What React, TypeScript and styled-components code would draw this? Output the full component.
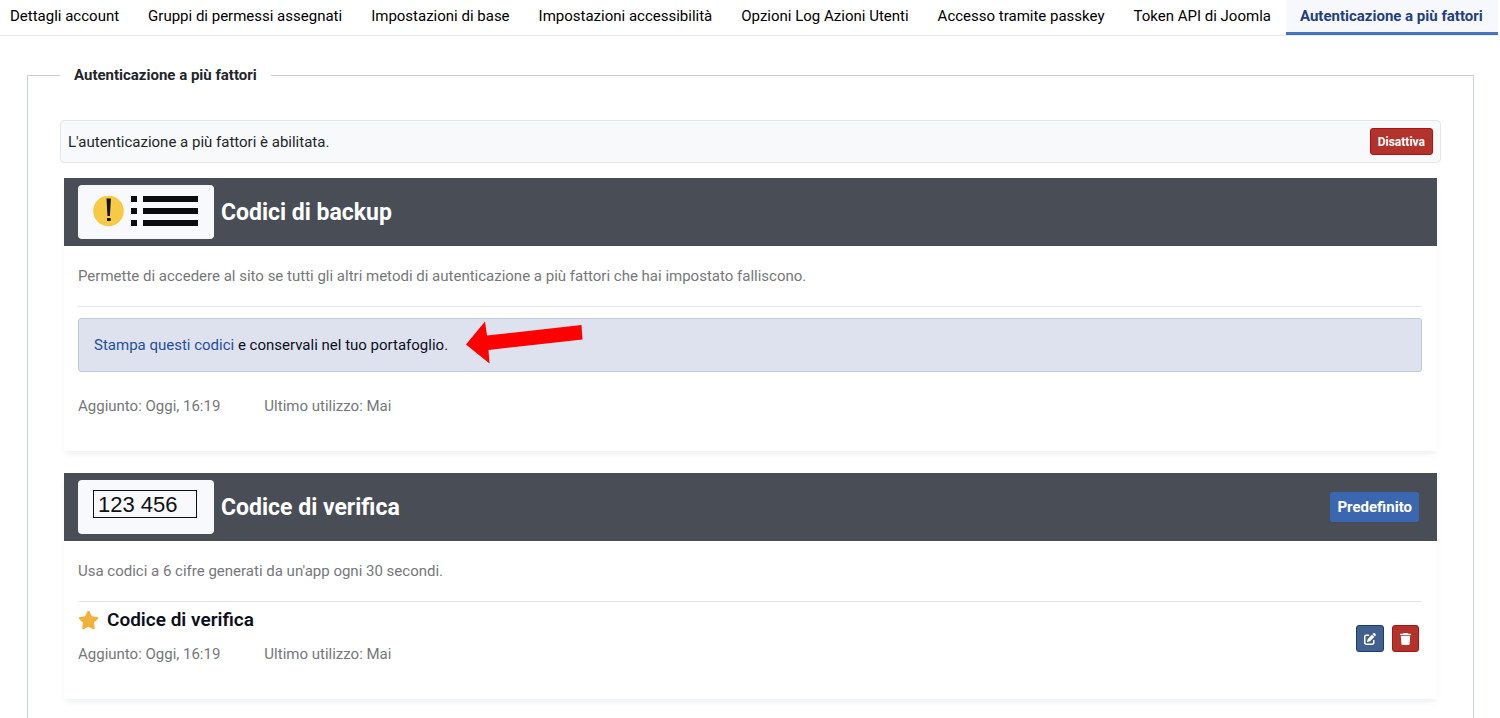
import React from "react";
import styled, { createGlobalStyle, css } from "styled-components";
import { FaPenToSquare, FaStar } from "react-icons/fa6";

const GlobalStyle = createGlobalStyle`
  *, *::before, *::after { box-sizing: border-box; }
  body {
    margin: 0;
    background: #fff;
    color: #22262a;
    font-family: Roboto, "Liberation Sans", sans-serif;
    font-size: 15px;
    line-height: 22px;
  }
  #root { overflow-x: hidden; }
`;

const Page = styled.div`
  display: flex;
  flex-direction: column;
  min-height: 100vh;
`;

const TabList = styled.nav`
  display: flex;
  margin-left: -4px;
  border-bottom: 1px solid #e6eaee;
`;

const Tab = styled.button<{ $active?: boolean }>`
  border: 0;
  border-bottom: 3px solid transparent;
  padding: 5px 15px 5px 14px;
  background: none;
  color: #000;
  font: inherit;
  white-space: nowrap;
  cursor: pointer;
  ${(p) =>
    p.$active &&
    css`
      border-bottom-color: #4674bd;
      background: #f6f8fb;
      color: #1f4080;
      font-weight: 700;
    `}
`;

const Panel = styled.fieldset`
  flex: 1;
  min-width: 0;
  margin: 24px 26px 0 27px;
  border: 1px solid #c6d3de;
  border-bottom: 0;
  padding: 30px 32px 20px;
`;

const Legend = styled.legend`
  padding: 4px 14px;
  color: #22262a;
  font-weight: 700;
`;

const StatusBar = styled.div`
  display: flex;
  align-items: center;
  justify-content: space-between;
  margin-bottom: 15px;
  border: 1px solid #e3e7eb;
  border-radius: 4px;
  padding: 7px;
  background: #f7f9fb;
`;

const Button = styled.button<{ $tone: "danger" | "primary" }>`
  display: inline-flex;
  align-items: center;
  justify-content: center;
  height: 27px;
  border: 1px solid ${(p) => (p.$tone === "danger" ? "#b50f12" : "#123d78")};
  border-radius: 3px;
  padding: 0 7px;
  background: ${(p) => (p.$tone === "danger" ? "#b2322c" : "#44608d")};
  color: #fff;
  font: 700 12px/18px Roboto, "Liberation Sans", sans-serif;
  cursor: pointer;
`;

const Card = styled.section`
  margin: 0 4px 22px;
  background: #fff;
  box-shadow: 0 4px 6px -2px rgba(30, 60, 100, 0.1);
`;

const CardHeader = styled.header`
  display: flex;
  align-items: center;
  gap: 7px;
  padding: 7px 18px 7px 14px;
  background: #494e56;
`;

const Thumb = styled.div`
  display: flex;
  width: 136px;
  height: 54px;
  padding: 7px 14px;
  border-radius: 4px;
  background: #f8f9fc;
`;

const CardTitle = styled.h2`
  flex: 1;
  margin: 0;
  padding-top: 2px;
  color: #fff;
  font-size: 23px;
  font-weight: 700;
  line-height: 28px;
`;

const Badge = styled.span`
  border-radius: 3px;
  padding: 4px 7px;
  background: #3b67b1;
  color: #fff;
  font-weight: 700;
`;

const CardBody = styled.div`
  padding: 19px 15px 34px 14px;
  color: #757779;
`;

const Description = styled.p`
  margin: 0;
  padding-bottom: 19px;
  border-bottom: 1px solid #e2e7ec;
`;

const Notice = styled.div`
  display: flex;
  align-items: center;
  gap: 18px;
  margin: 11px 0 23px;
  border: 1px solid #bfcadd;
  border-radius: 3px;
  padding: 0 15px;
  background: #dde2ee;
  color: #0b0f1c;
`;

const PrintLink = styled.a`
  color: #1f4f9f;
  text-decoration: none;
`;

const Meta = styled.div`
  display: flex;
  gap: 44px;
`;

const Method = styled.div`
  display: flex;
  align-items: center;
  justify-content: space-between;
  padding-top: 8px;
`;

const MethodTitle = styled.h3`
  display: flex;
  align-items: center;
  gap: 8px;
  margin: 0 0 13px;
  color: #0b0f1c;
  font-size: 19px;
  font-weight: 600;
  line-height: 20px;
`;

const Star = styled(FaStar)`
  width: 21px;
  height: 20px;
  color: #f0b23a;
`;

const Actions = styled.div`
  display: flex;
  gap: 8px;
  padding: 2px 3px 0 0;
`;

const tabs = [
  "Dettagli account",
  "Gruppi di permessi assegnati",
  "Impostazioni di base",
  "Impostazioni accessibilità",
  "Opzioni Log Azioni Utenti",
  "Accesso tramite passkey",
  "Token API di Joomla",
  "Autenticazione a più fattori",
];

const BackupCodesArt = () => (
  <svg width="108" height="40" viewBox="0 0 108 40" aria-hidden="true">
    <circle cx="16.500" cy="19" r="15.300" fill="#f6ca45" />
    <path d="M14.500 6.500h4.400l-1 17.500h-2.400zM15 26h3.600v3h-3.600z" fill="#111" />
    <path
      d="M39 4h6v6h-6zM39 16h6v6h-6zM39 28h6v6h-6zM51 4h55v6H51zM51 16h55v6H51zM51 28h55v6H51z"
      fill="#0b0b0d"
    />
  </svg>
);

const VerificationCodeArt = () => (
  <svg width="108" height="40" viewBox="0 0 108 40" aria-hidden="true">
    <rect x="1.500" y="3.500" width="103" height="27" fill="none" stroke="#111" />
    <text x="6" y="25" fontFamily="Liberation Sans, sans-serif" fontSize="22" fill="#111">
      123 456
    </text>
  </svg>
);

const RedArrow = () => (
  <svg width="117" height="52" viewBox="0 0 117 52" aria-hidden="true">
    <path d="M0 25.500 19 2.500 21 16.500 115.500 6 116.500 20.500 22.500 31 23.500 44.500z" fill="#fe0000" />
  </svg>
);

const TrashIcon = () => (
  <svg width="11" height="12" viewBox="0 0 11 12" fill="currentColor" aria-hidden="true">
    <path d="M3.500 0h4l.5.7h2.500q.5 0 .5.5v.8H0v-.8q0-.5.5-.5H3zM.8 2.700h9.400l-.6 8.200q-.1 1.100-1.100 1.100h-6q-1 0-1.100-1.100z" />
  </svg>
);

const Usage = () => (
  <Meta>
    <span>Aggiunto: Oggi, 16:19</span>
    <span>Ultimo utilizzo: Mai</span>
  </Meta>
);

export default function App() {
  return (
    <Page>
      <GlobalStyle />
      <TabList role="tablist">
        {tabs.map((label, i) => (
          <Tab
            key={label}
            type="button"
            role="tab"
            aria-selected={i === tabs.length - 1}
            $active={i === tabs.length - 1}
          >
            {label}
          </Tab>
        ))}
      </TabList>
      <Panel>
        <Legend>Autenticazione a più fattori</Legend>
        <StatusBar>
          <span>L'autenticazione a più fattori è abilitata.</span>
          <Button type="button" $tone="danger">
            Disattiva
          </Button>
        </StatusBar>
        <Card>
          <CardHeader>
            <Thumb>
              <BackupCodesArt />
            </Thumb>
            <CardTitle>Codici di backup</CardTitle>
          </CardHeader>
          <CardBody>
            <Description>
              Permette di accedere al sito se tutti gli altri metodi di autenticazione a più fattori che hai
              impostato falliscono.
            </Description>
            <Notice>
              <span>
                <PrintLink href="#codici">Stampa questi codici</PrintLink> e conservali nel tuo portafoglio.
              </span>
              <RedArrow />
            </Notice>
            <Usage />
          </CardBody>
        </Card>
        <Card>
          <CardHeader>
            <Thumb>
              <VerificationCodeArt />
            </Thumb>
            <CardTitle>Codice di verifica</CardTitle>
            <Badge>Predefinito</Badge>
          </CardHeader>
          <CardBody>
            <Description>Usa codici a 6 cifre generati da un'app ogni 30 secondi.</Description>
            <Method>
              <div>
                <MethodTitle>
                  <Star aria-hidden="true" />
                  Codice di verifica
                </MethodTitle>
                <Usage />
              </div>
              <Actions>
                <Button type="button" $tone="primary" aria-label="Modifica">
                  <FaPenToSquare size={12} aria-hidden="true" />
                </Button>
                <Button type="button" $tone="danger" aria-label="Elimina">
                  <TrashIcon />
                </Button>
              </Actions>
            </Method>
          </CardBody>
        </Card>
      </Panel>
    </Page>
  );
}
